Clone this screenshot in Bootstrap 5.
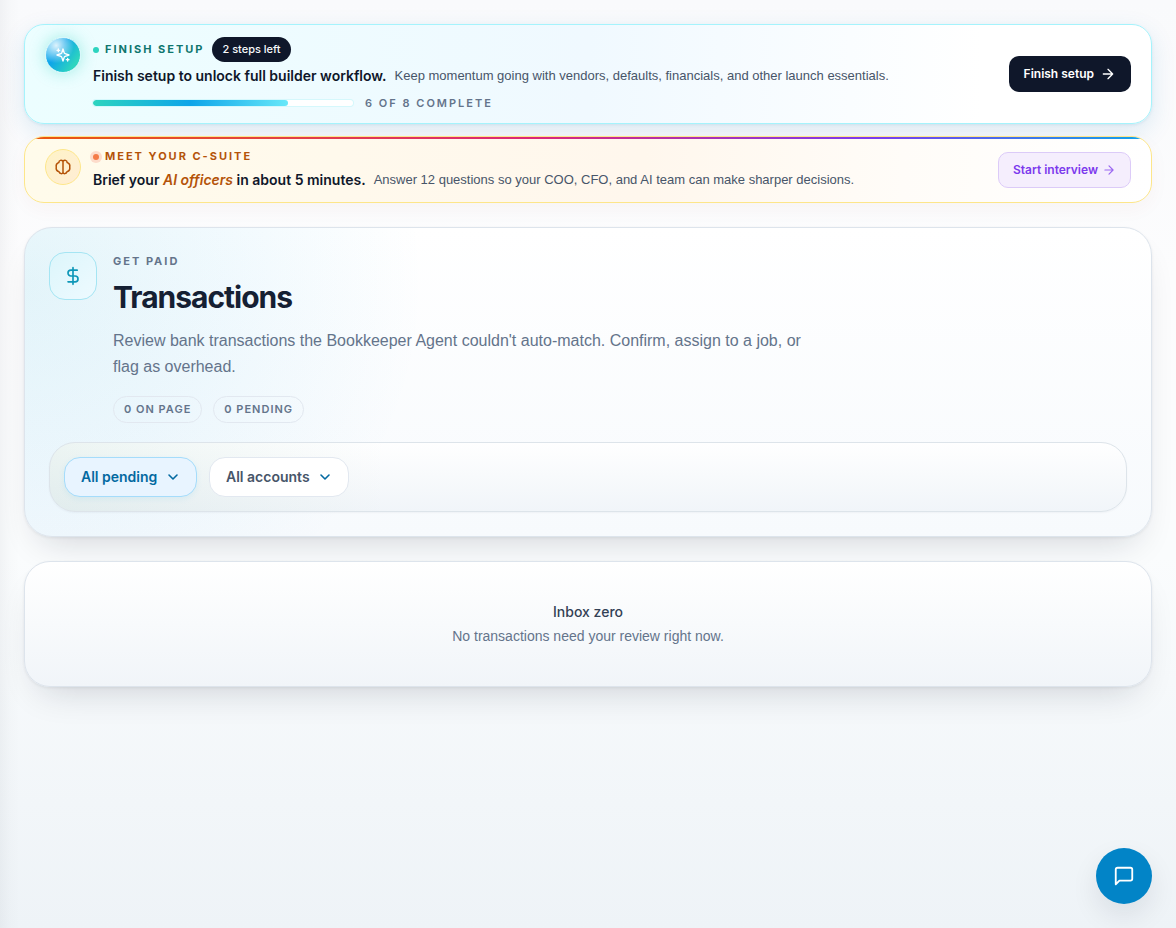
<!DOCTYPE html>
<html lang="en">
<head>
<meta charset="utf-8">
<meta name="viewport" content="width=device-width, initial-scale=1">
<title>Transactions</title>
<link href="https://cdn.jsdelivr.net/npm/bootstrap@5.3.0/dist/css/bootstrap.min.css" rel="stylesheet">
<style>
  body {
    font-family: Inter, "Liberation Sans", sans-serif;
    color: #0f172a;
    min-height: 100vh;
    background:
      linear-gradient(90deg, rgba(15,23,42,.04), rgba(15,23,42,.01) 10px, transparent 20px),
      linear-gradient(180deg, #f9fafc 0, #fcfcfd 30%, #fafcfd 60%, #eef3f7 100%);
  }
  svg { display: block; flex: none; fill: none; stroke: currentColor; stroke-width: 2; stroke-linecap: round; stroke-linejoin: round; }

  .banner { border: 1px solid; border-radius: 20px; padding: 12px 20px; }
  .banner-setup {
    border-color: #a5f3fc;
    background: linear-gradient(90deg, #ecfeff 0, #f0f9ff 50%, #fff 85%);
    box-shadow: 0 8px 24px rgba(14,116,180,.13), 0 1px 3px rgba(14,116,180,.1);
  }
  .suite-wrap { margin-top: 12px; border-radius: 20px; box-shadow: 0 6px 20px rgba(154,52,18,.04); }
  .banner-suite {
    position: relative; overflow: hidden;
    border-color: #fde68a;
    background: linear-gradient(90deg, #fffbeb 0, #fff7ed 55%, #fffcf8 78%, #fff 100%);
  }
  .banner-suite::before {
    content: ""; position: absolute; inset: 0 0 auto; height: 2px;
    background: linear-gradient(90deg, #ea580c, #db2777 45%, #7c3aed 75%, #0ea5e9);
  }
  .orb { width: 36px; height: 36px; border-radius: 50%; flex: none; display: grid; place-items: center; }
  .orb-setup {
    color: #fff; border: 1px solid #d5f7fa;
    background: radial-gradient(circle at 30% 22%, rgba(255,255,255,.85), rgba(255,255,255,0) 50%), linear-gradient(125deg, #38bdf8 0, #0ea5e9 38%, #2dd4bf 80%);
    box-shadow: 0 0 16px rgba(45,212,191,.4);
  }
  .orb-suite { color: #b45309; border: 1px solid #fde68a; background: linear-gradient(135deg, #fef3c7, #ffedd5); }
  .eyebrow { font-size: 11px; line-height: 15px; font-weight: 700; letter-spacing: 2px; text-transform: uppercase; }
  .eyebrow-teal { color: #0f766e; }
  .eyebrow-amber { color: #b45309; }
  .steps { height: 25px; padding: 0 10px; font-size: 11px; line-height: 25px; font-weight: 500; background: #0f172a; color: #f8fafc; border-radius: 13px; }
  .dot { width: 6px; height: 6px; border-radius: 50%; margin-right: 6px; flex: none; }
  .dot-teal { background: #2dd4bf; }
  .dot-orange { background: #f47c48; box-shadow: 0 0 0 3px #fddccb; }
  .headline { font-size: 14px; line-height: 20px; font-weight: 600; }
  .headline em { color: #b45309; }
  .note, .lede, .empty-note { font-family: "Liberation Sans", Arial, sans-serif; }
  .note { font-size: 13px; line-height: 20px; color: #475569; }
  .suite-copy { margin-top: 6px; }
  .meter-row { margin-top: 9px; }
  .setup-meter { width: 260px; height: 6px; border-radius: 6px; background: #fff; box-shadow: 0 0 0 1px #d5f8fc; }
  .setup-meter .progress-bar { border-radius: 6px; background: linear-gradient(90deg, #2dd4bf, #0ea5e9 50%, #67e8f9); }
  .count { font-size: 11px; line-height: 16px; font-weight: 600; letter-spacing: 2px; color: #64748b; }
  .act { height: 36px; padding: 0 14px; font-size: 12px; font-weight: 600; border-radius: 10px; }
  .act-dark, .act-dark:hover { background: #0f172a; color: #fff; gap: 6px; }
  .act-violet, .act-violet:hover { background: #f5eefd; color: #7c3aed; border-color: #dccbf8; }

  .panel { border: 1px solid #dde4ec; box-shadow: 0 18px 36px -16px rgba(15,23,42,.19), 0 1px 3px rgba(15,23,42,.07); }
  .hero {
    border-radius: 28px; padding: 24px;
    background:
      radial-gradient(ellipse 400px 380px at 0 18%, rgba(14,165,210,.11), rgba(14,165,233,.06) 50%, transparent),
      linear-gradient(180deg, #fff, #f7fafd);
  }
  .hero-icon { width: 48px; height: 48px; border: 1px solid #a5e5f3; border-radius: 16px; color: #0e97b8; background: linear-gradient(135deg, #dcf6fb, #eefaff); display: grid; place-items: center; flex: none; }
  .hero-eyebrow { line-height: 18px; color: #64748b; }
  .hero-title { font-size: 30px; line-height: 36px; font-weight: 700; letter-spacing: -1px; margin: 9px 0 13px; color: #152033; }
  .lede { font-size: 16px; line-height: 26px; color: #64748b; max-width: 712px; margin-bottom: 16px; }
  .chips { gap: 11px; }
  .chip { height: 27px; padding: 0 10px; font-size: 11px; line-height: 25px; font-weight: 600; letter-spacing: 1px; color: #64748b; border: 1px solid #e2e8f0; border-radius: 14px; }
  .filters { margin-top: 19px; gap: 12px; padding: 14px; border: 1px solid #dde4ea; border-radius: 26px; background: linear-gradient(90deg, rgba(16,120,80,.07), transparent 340px), linear-gradient(180deg, rgba(255,255,255,.9), #f1f5f9); box-shadow: 0 1px 2px rgba(15,23,42,.04); }
  .pick {
    width: auto; height: 40px; padding: 0 38px 2px 16px; font-size: 14px; font-weight: 600; border-radius: 16px; color: #475569; border-color: #e2e8f0; background-color: #fff;
    background-image: url("data:image/svg+xml,%3Csvg xmlns='http://www.w3.org/2000/svg' viewBox='0 0 24 24' fill='none' stroke='%230369a1' stroke-width='2.4' stroke-linecap='round' stroke-linejoin='round'%3E%3Cpath d='m6 9 6 6 6-6'/%3E%3C/svg%3E");
    background-size: 16px; background-position: right 15px center;
  }
  .pick-on { color: #0369a1; border-color: #a5dcfb; background-color: #e8f4ff; box-shadow: 0 2px 6px rgba(14,165,233,.08); }
  .empty { border-radius: 26px; padding: 40px 24px; font-size: 14px; line-height: 20px; background: linear-gradient(180deg, #fff, #f1f5f9); }
  .empty-title { color: #334155; font-weight: 500; margin-bottom: 4px; }
  .empty-note { color: #64748b; }
  .chat { width: 56px; height: 56px; right: 24px; bottom: 24px; background: #0284c7; color: #fff; box-shadow: 0 12px 28px rgba(15,23,42,.09); }
  .chat:hover { background: #0369a1; color: #fff; }
</style>
</head>
<body>
<main class="p-4">
  <section class="banner banner-setup d-flex align-items-center gap-3">
    <div class="d-flex align-items-start gap-2 flex-grow-1 pe-3">
      <div class="orb orb-setup me-1">
        <svg width="16" height="16" viewBox="0 0 24 24"><path d="m12 3-1.900 5.800a2 2 0 0 1-1.300 1.300L3 12l5.800 1.900a2 2 0 0 1 1.300 1.300L12 21l1.900-5.800a2 2 0 0 1 1.300-1.300L21 12l-5.800-1.900a2 2 0 0 1-1.300-1.300z"/><path d="M5 3v4M3 5h4M19 17v4M17 19h4"/></svg>
      </div>
      <div class="flex-grow-1">
        <div class="d-flex align-items-center">
          <span class="dot dot-teal"></span>
          <span class="eyebrow eyebrow-teal me-2">Finish setup</span>
          <span class="steps">2 steps left</span>
        </div>
        <div class="d-flex flex-wrap mt-1">
          <span class="headline me-2">Finish setup to unlock full builder workflow.</span>
          <span class="note">Keep momentum going with vendors, defaults, financials, and other launch essentials.</span>
        </div>
        <div class="meter-row d-flex align-items-center">
          <div class="progress setup-meter me-2" role="progressbar" aria-label="Setup progress" aria-valuenow="6" aria-valuemin="0" aria-valuemax="8">
            <div class="progress-bar" style="width:75%"></div>
          </div>
          <span class="count ms-1">6 OF 8 COMPLETE</span>
        </div>
      </div>
    </div>
    <button type="button" class="btn act act-dark d-inline-flex align-items-center flex-shrink-0">Finish setup
      <svg width="16" height="16" viewBox="0 0 24 24"><path d="M5 12h14M12 5l7 7-7 7"/></svg>
    </button>
  </section>

  <div class="suite-wrap">
    <section class="banner banner-suite d-flex align-items-center gap-3">
      <div class="d-flex align-items-start gap-2 flex-grow-1 pe-3">
        <div class="orb orb-suite me-1">
          <svg width="18" height="18" viewBox="0 0 24 24"><path d="M12 4v16M12 4.500C10 2 6.500 3 6.500 6 3.800 7 2.500 9.500 3 12c-.5 3 1 5.500 3.500 6.200C8 21.500 11 21.500 12 19.500M12 4.500C14 2 17.500 3 17.500 6c2.700 1 4 3.500 3.500 6 .5 3-1 5.500-3.500 6.200-1.500 3.300-4.500 3.300-5.500 1.300"/></svg>
        </div>
        <div>
          <div class="d-flex align-items-center">
            <span class="dot dot-orange"></span>
            <span class="eyebrow eyebrow-amber">Meet your C-suite</span>
          </div>
          <div class="suite-copy d-flex flex-wrap">
            <span class="headline me-2">Brief your <em>AI officers</em> in about 5 minutes.</span>
            <span class="note">Answer 12 questions so your COO, CFO, and AI team can make sharper decisions.</span>
          </div>
        </div>
      </div>
      <button type="button" class="btn act act-violet d-inline-flex align-items-center gap-1 flex-shrink-0">Start interview
        <svg width="14" height="14" viewBox="0 0 24 24" opacity=".75"><path d="M5 12h14M12 5l7 7-7 7"/></svg>
      </button>
    </section>
  </div>

  <section class="panel hero mt-4">
    <div class="d-flex align-items-start gap-3">
      <div class="hero-icon">
        <svg width="20" height="20" viewBox="0 0 24 24"><path d="M12 2v20M17 5H9.500a3.500 3.500 0 0 0 0 7h5a3.500 3.500 0 0 1 0 7H6"/></svg>
      </div>
      <div>
        <div class="eyebrow hero-eyebrow">Get paid</div>
        <h1 class="hero-title">Transactions</h1>
        <p class="lede">Review bank transactions the Bookkeeper Agent couldn't auto-match. Confirm, assign to a job, or flag as overhead.</p>
        <div class="chips d-flex">
          <span class="chip">0 ON PAGE</span>
          <span class="chip">0 PENDING</span>
        </div>
      </div>
    </div>
    <form class="filters d-flex flex-wrap">
      <select class="form-select pick pick-on" aria-label="Status"><option>All pending</option></select>
      <select class="form-select pick" aria-label="Account"><option>All accounts</option></select>
    </form>
  </section>

  <section class="panel empty mt-4 text-center">
    <div class="empty-title">Inbox zero</div>
    <div class="empty-note">No transactions need your review right now.</div>
  </section>
</main>

<button type="button" class="btn chat rounded-circle position-fixed d-flex align-items-center justify-content-center p-0" aria-label="Open chat">
  <svg width="22" height="22" viewBox="0 0 24 24"><path d="M21 15a2 2 0 0 1-2 2H7l-4 4V5a2 2 0 0 1 2-2h14a2 2 0 0 1 2 2z"/></svg>
</button>
<script src="https://cdn.jsdelivr.net/npm/bootstrap@5.3.0/dist/js/bootstrap.bundle.min.js"></script>
</body>
</html>
